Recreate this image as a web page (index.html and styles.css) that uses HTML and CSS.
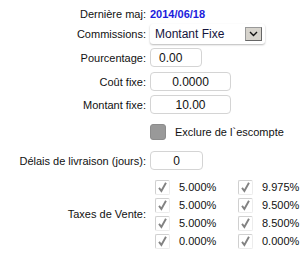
FILE: index.html
```html
<!DOCTYPE html>
<html lang="fr">
<head>
<meta charset="utf-8">
<link rel="stylesheet" href="styles.css">
</head>
<body>
<div class="form">
  <div class="row r-date">
    <span class="label">Dernière maj:</span>
    <span class="date">2014/06/18</span>
  </div>
  <div class="row r-sel">
    <span class="label">Commissions:</span>
    <div class="select">
      <span>Montant Fixe</span>
      <span class="dd"><svg width="9" height="6" viewBox="0 0 9 6"><path d="M1 1 L4.5 4.5 L8 1" fill="none" stroke="#111" stroke-width="1.4"/></svg></span>
    </div>
  </div>
  <div class="row r-pct">
    <span class="label">Pourcentage:</span>
    <div class="input w52 left">0.00</div>
  </div>
  <div class="row r-cout">
    <span class="label">Coût fixe:</span>
    <div class="input w81">0.0000</div>
  </div>
  <div class="row r-mont">
    <span class="label">Montant fixe:</span>
    <div class="input w81">10.00</div>
  </div>
  <div class="row r-excl">
    <span class="label"></span>
    <div class="excl"><span class="gbox"></span><span>Exclure de l`escompte</span></div>
  </div>
  <div class="row r-del">
    <span class="label">Délais de livraison (jours):</span>
    <div class="input w53">0</div>
  </div>
  <div class="row r-tax">
    <span class="label">Taxes de Vente:</span>
    <div class="taxes">
      <div class="tax"><span class="chk"><svg viewBox="0 0 15 15"><path d="M3.5 8 L6.2 11.5 L11.5 2" fill="none" stroke="#828282" stroke-width="2.2"/></svg></span><span>5.000%</span></div>
      <div class="tax"><span class="chk"><svg viewBox="0 0 15 15"><path d="M3.5 8 L6.2 11.5 L11.5 2" fill="none" stroke="#828282" stroke-width="2.2"/></svg></span><span>9.975%</span></div>
      <div class="tax"><span class="chk"><svg viewBox="0 0 15 15"><path d="M3.5 8 L6.2 11.5 L11.5 2" fill="none" stroke="#828282" stroke-width="2.2"/></svg></span><span>5.000%</span></div>
      <div class="tax"><span class="chk"><svg viewBox="0 0 15 15"><path d="M3.5 8 L6.2 11.5 L11.5 2" fill="none" stroke="#828282" stroke-width="2.2"/></svg></span><span>9.500%</span></div>
      <div class="tax"><span class="chk"><svg viewBox="0 0 15 15"><path d="M3.5 8 L6.2 11.5 L11.5 2" fill="none" stroke="#828282" stroke-width="2.2"/></svg></span><span>5.000%</span></div>
      <div class="tax"><span class="chk"><svg viewBox="0 0 15 15"><path d="M3.5 8 L6.2 11.5 L11.5 2" fill="none" stroke="#828282" stroke-width="2.2"/></svg></span><span>8.500%</span></div>
      <div class="tax"><span class="chk"><svg viewBox="0 0 15 15"><path d="M3.5 8 L6.2 11.5 L11.5 2" fill="none" stroke="#828282" stroke-width="2.2"/></svg></span><span>0.000%</span></div>
      <div class="tax"><span class="chk"><svg viewBox="0 0 15 15"><path d="M3.5 8 L6.2 11.5 L11.5 2" fill="none" stroke="#828282" stroke-width="2.2"/></svg></span><span>0.000%</span></div>
    </div>
  </div>
</div>
</body>
</html>
```

FILE: styles.css
```css
html, body {
  margin: 0;
  padding: 0;
  background: #fff;
}
body {
  width: 306px;
  height: 262px;
  overflow: hidden;
  font-family: "Liberation Sans", Arial, sans-serif;
  font-size: 11px;
  color: #111;
}
.form {
  padding-top: 6px;
}
.row {
  display: grid;
  grid-template-columns: 146px 1fr;
  column-gap: 4px;
  align-items: center;
}
.label {
  text-align: right;
  white-space: nowrap;
}
.r-date { height: 16px; }
.r-sel { margin-top: 2px; height: 20px; }
.r-pct { margin-top: 4px; }
.r-cout { margin-top: 5px; }
.r-mont { margin-top: 4px; }
.r-excl { margin-top: 10px; height: 16px; }
.r-del { margin-top: 11px; }
.r-tax { margin-top: 8px; }

.date {
  color: #1c1cdc;
  font-weight: bold;
}
.select {
  width: 115px;
  height: 20px;
  box-sizing: border-box;
  background: #fff;
  border-radius: 3px;
  box-shadow: 0 1px 2px rgba(0,0,0,0.28);
  display: flex;
  align-items: center;
  justify-content: space-between;
  padding: 0 3px 0 5px;
  color: #14143c;
  font-size: 12px;
}
.dd {
  width: 17px;
  height: 14px;
  box-sizing: border-box;
  background: #d6d3cc;
  border: 1px solid #666;
  border-top-color: #999;
  border-left-color: #999;
  display: flex;
  align-items: center;
  justify-content: center;
}
.input {
  height: 19px;
  box-sizing: border-box;
  border: 1px solid #d4d4d4;
  border-radius: 4px;
  background: #fff;
  display: flex;
  align-items: center;
  justify-content: center;
  font-size: 12px;
  color: #111;
}
.input.left { justify-content: flex-start; padding-left: 8px; }
.w52 { width: 52px; }
.w53 { width: 53px; }
.w81 { width: 81px; }
.excl {
  display: flex;
  align-items: center;
  gap: 9px;
  font-size: 11px;
}
.gbox {
  width: 16px;
  height: 16px;
  border-radius: 3px;
  background: #999;
  box-sizing: border-box;
  border: 1px solid #8c8c8c;
}
.taxes {
  display: grid;
  grid-template-columns: 83px 1fr;
  grid-auto-rows: 18px;
  padding-left: 5px;
}
.tax {
  display: flex;
  align-items: center;
  gap: 9px;
}
.chk {
  width: 15px;
  height: 15px;
  box-sizing: border-box;
  border: 1px solid #d0d0d0;
  border-right-color: #ececec;
  border-bottom-color: #ececec;
  border-radius: 2px;
  background: #fff;
  display: block;
}
.chk svg {
  display: block;
  width: 13px;
  height: 13px;
}
```
